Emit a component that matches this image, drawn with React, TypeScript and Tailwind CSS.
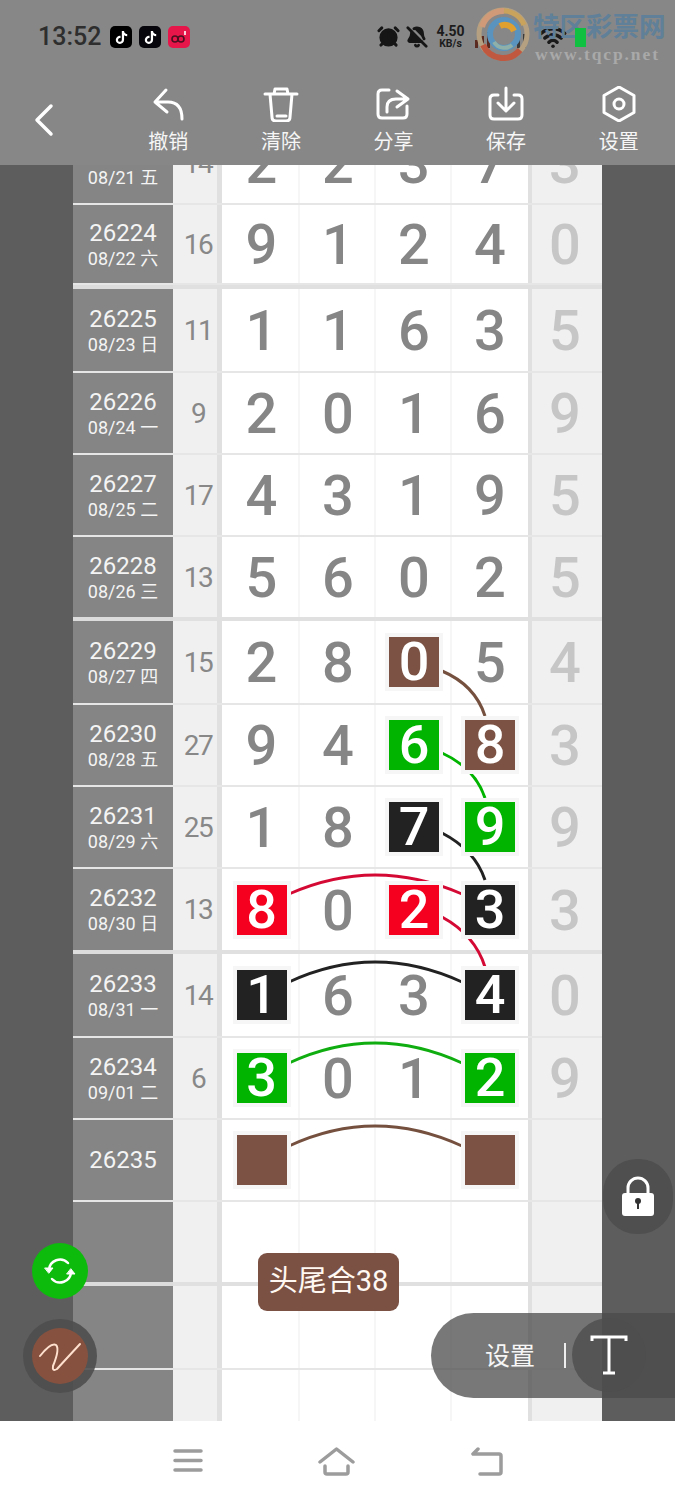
import React from "react";
import { FaTiktok } from "react-icons/fa";
import { Wifi, AlarmClock, BellOff } from "lucide-react";

type Cell = { v: string; c?: "b" | "g" | "k" | "r" };
type Row = { id: string; date: string; sum: string; cells: Cell[]; last: string; h: string };

const boxClass: Record<string, string> = {
  b: "bg-[#7b5243]",
  g: "bg-[#00b400]",
  k: "bg-[#222222]",
  r: "bg-[#f5001e]",
};

const cellClass = [
  "w-[78px] pl-[3px] border-r-2 border-[#f6f6f6]",
  "w-[76px] pl-[2px] border-r-2 border-[#f6f6f6]",
  "w-[76px] pl-[2px] border-r-2 border-[#f6f6f6]",
  "w-[76px]",
];

const d = (s: string): Cell[] =>
  s.split(" ").map((t) => ({ v: t[0] === "_" ? "" : t[0], c: t[1] as Cell["c"] }));

const groups: Row[][] = [
  [
    { id: "26223", date: "08/21 五", sum: "14", cells: d("2 2 3 7"), last: "3", h: "h-[82px]" },
    { id: "26224", date: "08/22 六", sum: "16", cells: d("9 1 2 4"), last: "0", h: "h-[80px]" },
  ],
  [
    { id: "26225", date: "08/23 日", sum: "11", cells: d("1 1 6 3"), last: "5", h: "h-[84px]" },
    { id: "26226", date: "08/24 一", sum: "9", cells: d("2 0 1 6"), last: "9", h: "h-[82px]" },
    { id: "26227", date: "08/25 二", sum: "17", cells: d("4 3 1 9"), last: "5", h: "h-[82px]" },
    { id: "26228", date: "08/26 三", sum: "13", cells: d("5 6 0 2"), last: "5", h: "h-[80px]" },
  ],
  [
    { id: "26229", date: "08/27 四", sum: "15", cells: d("2 8 0b 5"), last: "4", h: "h-[84px]" },
    { id: "26230", date: "08/28 五", sum: "27", cells: d("9 4 6g 8b"), last: "3", h: "h-[82px]" },
    { id: "26231", date: "08/29 六", sum: "25", cells: d("1 8 7k 9g"), last: "9", h: "h-[82px]" },
    { id: "26232", date: "08/30 日", sum: "13", cells: d("8r 0 2r 3k"), last: "3", h: "h-[81px]" },
  ],
  [
    { id: "26233", date: "08/31 一", sum: "14", cells: d("1k 6 3 4k"), last: "0", h: "h-[84px]" },
    { id: "26234", date: "09/01 二", sum: "6", cells: d("3g 0 1 2g"), last: "9", h: "h-[82px]" },
    { id: "26235", date: "", sum: "", cells: d("_b _ _ _b"), last: "", h: "h-[82px]" },
    { id: "", date: "", sum: "", cells: d("_ _ _ _"), last: "", h: "h-[80px]" },
  ],
  [
    { id: "", date: "", sum: "", cells: d("_ _ _ _"), last: "", h: "h-[84px]" },
    { id: "", date: "", sum: "", cells: d("_ _ _ _"), last: "", h: "h-[82px]" },
  ],
];

function GridRow({ r, isLast }: { r: Row; isLast: boolean }) {
  const line = isLast ? "" : "border-b-2 border-[#e6e6e6]";
  return (
    <div className={`flex ${r.h} ${line}`}>
      <div className="w-[100px] shrink-0 bg-[#858585] flex flex-col items-center justify-center text-[#f4f4f4]">
        {r.id && <div className="text-[24px] leading-[27px]">{r.id}</div>}
        {r.date && <div className="text-[18px] leading-[24px] -mb-[2px]">{r.date}</div>}
      </div>
      <div className="w-[49px] shrink-0 pl-[6px] pt-[1px] bg-[#f0f0f0] border-r-[5px] border-[#e0e0e0] flex items-center justify-center text-[28px] text-[#888888] tracking-[-1.5px]">
        {r.sum}
      </div>
      {r.cells.map((c, i) => (
        <div
          key={i}
          className={`${cellClass[i]} shrink-0 bg-white flex items-center justify-center text-[56px] font-medium leading-none text-[#868686]`}
        >
          {c.c ? (
            <div className="relative z-10 w-[58px] h-[58px] bg-[#f6f6f6] flex items-center justify-center">
              <div className={`w-[50px] h-[50px] ${boxClass[c.c]} flex items-center justify-center text-white font-medium text-[54px]`}>
                {c.v}
              </div>
            </div>
          ) : (
            <span className="pt-[2px]">{c.v}</span>
          )}
        </div>
      ))}
      <div className="w-[74px] shrink-0 pr-[4px] pt-[2px] bg-[#f0f0f0] border-l-4 border-[#e0e0e0] flex items-center justify-center text-[56px] font-medium leading-none text-[#c6c6c6]">
        {r.last}
      </div>
    </div>
  );
}

function ToolItem({ label, children }: { label: string; children: React.ReactNode }) {
  return (
    <div className="flex-1 flex flex-col items-center">
      <svg width="36" height="36" viewBox="0 0 36 36" fill="none" stroke="white" strokeWidth="3" strokeLinecap="round" strokeLinejoin="round">
        {children}
      </svg>
      <div className="text-[20px] leading-[28px] text-[#f6f6f6] mt-[6px]">{label}</div>
    </div>
  );
}

export default function App() {
  return (
    <div
      className="relative w-[675px] h-[1500px] overflow-hidden bg-white flex flex-col"
      style={{ fontFamily: 'Roboto, "Noto Sans CJK SC", sans-serif' }}
    >
      {/* Header */}
      <div className="relative h-[165px] shrink-0 bg-[#878787] z-20">
        <div className="relative h-[86px] flex items-start pt-[22px] pl-[38px]">
          <span className="text-[25px] leading-[30px] font-medium text-[#2e2e2e]">13:52</span>
          <div className="flex gap-[7px] ml-[9px] mt-[4px]">
            <div className="w-[22px] h-[22px] rounded-[5px] bg-black flex items-center justify-center">
              <FaTiktok className="text-white text-[13px]" />
            </div>
            <div className="w-[22px] h-[22px] rounded-[5px] bg-[#06060c] flex items-center justify-center">
              <FaTiktok className="text-white text-[13px]" />
            </div>
            <div className="w-[22px] h-[22px] rounded-[5px] bg-[#e6154a] flex items-center justify-center">
              <svg width="18" height="14" viewBox="0 0 18 14" fill="none" stroke="#4a1020" strokeWidth="1.6">
                <circle cx="5" cy="9" r="3" />
                <circle cx="11" cy="9" r="3" />
                <path d="M15 1v4" stroke="white" />
              </svg>
            </div>
          </div>
          <div className="absolute left-[377px] top-[25px] text-[#161616]">
            <AlarmClock size={23} strokeWidth={3} fill="#161616" stroke="#161616" />
          </div>
          <div className="absolute left-[406px] top-[26px] text-[#161616]">
            <BellOff size={22} strokeWidth={3} fill="#161616" stroke="#161616" />
          </div>
          <div className="absolute left-[435px] top-[24px] w-[31px] text-center font-bold text-[#1c1c1c]">
            <div className="text-[14px] leading-[14px]">4.50</div>
            <div className="text-[10.500px] leading-[12px]">KB/s</div>
          </div>
          {/* signal bars under the watermark */}
          <div className="absolute left-[475px] top-[30px] flex items-end gap-[3px] h-[18px]">
            <div className="w-[3px] h-[8px] bg-[#5a2a20]" />
            <div className="w-[3px] h-[12px] bg-[#5a2a20]" />
            <div className="w-[3px] h-[16px] bg-[#5a2a20]" />
            <div className="w-[3px] h-[10px] bg-[#3a3a3a] ml-[24px]" />
            <div className="w-[3px] h-[14px] bg-[#3a3a3a]" />
          </div>
          <div className="absolute left-[539px] top-[23px] text-[#1a1a1a]">
            <Wifi size={28} strokeWidth={3} />
          </div>
          {/* watermark */}
          <svg className="absolute left-[474px] top-[7px]" width="58" height="54" viewBox="0 0 58 54" fill="none">
            <circle cx="29" cy="27" r="24" stroke="#b5a181" strokeWidth="5" />
            <path d="M8 20A22 22 0 0 1 30 4" stroke="#d09a78" strokeWidth="6" />
            <path d="M30 4A22 22 0 0 1 50 18" stroke="#c9a25c" strokeWidth="5" />
            <path d="M9 38A22 22 0 0 0 46 43" stroke="#c0573f" strokeWidth="6" />
            <circle cx="30" cy="27" r="14" stroke="#5a93bd" strokeWidth="6" />
            <path d="M26 19A10 10 0 0 1 40 24" stroke="#e0a02f" strokeWidth="6" />
            <path d="M20 35A12 12 0 0 0 38 38" stroke="#8fb0a8" strokeWidth="4" />
          </svg>
          <div className="absolute left-[533px] top-[12px] text-[26.500px] leading-[30px] font-bold text-[#5f8098] whitespace-nowrap">
            特区彩票网
          </div>
          <div className="absolute left-[575px] top-[28px] w-[11px] h-[19px] bg-[#10c040]" />
          <div
            className="absolute left-[535px] top-[45px] text-[17.500px] leading-[18px] font-bold text-[#a9a9a9] tracking-[1.900px] whitespace-nowrap"
            style={{ fontFamily: '"Liberation Serif", serif' }}
          >
            www.tqcp.net
          </div>
        </div>
        <div className="flex h-[79px] items-start">
          <div className="w-[112px] shrink-0 pl-[34px] pt-[17px]">
            <svg width="22" height="34" viewBox="0 0 22 34" fill="none" stroke="white" strokeWidth="3.5" strokeLinecap="round" strokeLinejoin="round">
              <path d="M17 3 3 17l14 14" />
            </svg>
          </div>
          <div className="flex-1 flex">
            <ToolItem label="撤销">
              <path d="M16 4 5 16l12 10M5 16h13q14 0 14 17" />
            </ToolItem>
            <ToolItem label="清除">
              <path d="M2 8h32M11 8l1-5h12l1 5M7 8l2 23q0 4 4 4h10q4 0 4-4l2-23M14 30h9" />
            </ToolItem>
            <ToolItem label="分享">
              <path d="M14 4H7Q3 4 3 8v20q0 4 4 4h21q4 0 4-4v-8M12 26v-5q0-8 9-8h12M22 5l11 8-11 8" />
            </ToolItem>
            <ToolItem label="保存">
              <path d="M10 9H6q-4 0-4 4v16q0 4 4 4h24q4 0 4-4V13q0-4-4-4h-4M18 2v22M10 17l8 8 8-8" />
            </ToolItem>
            <ToolItem label="设置">
              <path d="M18 1 33 9.5v17L18 35 3 26.500V9.500Z" />
              <circle cx="18" cy="18" r="5" />
            </ToolItem>
          </div>
        </div>
      </div>

      {/* Body */}
      <div className="relative h-[1256px] shrink-0 overflow-hidden bg-[#5d5d5d] flex justify-center">
        <div className="w-[529px] shrink-0 -mt-[42px]">
          {groups.map((g, gi) => (
            <div key={gi}>
              {gi > 0 && (
                <div className="h-1 flex">
                  <div className="w-[100px] bg-[#dcdcdc]" />
                  <div className="flex-1 bg-[#e0e0e0]" />
                </div>
              )}
              {g.map((r, i) => (
                <GridRow key={i} r={r} isLast={i === 3} />
              ))}
            </div>
          ))}
        </div>
        {/* connecting curves */}
        <svg className="absolute left-0 top-0" width="675" height="1256" viewBox="0 165 675 1256" fill="none" strokeWidth="3">
          <path d="M442 671Q475 685 485 716" stroke="#75503f" />
          <path d="M442 753Q475 768 485 798" stroke="#00b400" />
          <path d="M442 833Q475 850 485 880" stroke="#222222" />
          <path d="M289 894Q375 856 462 894" stroke="#d40a35" />
          <path d="M442 917Q475 935 485 967" stroke="#d40a35" />
          <path d="M289 982Q375 942 462 982" stroke="#222222" />
          <path d="M289 1063Q375 1023 462 1063" stroke="#10ad10" />
          <path d="M289 1146Q375 1106 462 1146" stroke="#75503f" />
        </svg>
      </div>

      {/* Footer nav */}
      <div className="flex-1 relative bg-white">
        <svg className="absolute left-[172px] top-[27px]" width="32" height="26" viewBox="0 0 32 26" fill="none" stroke="#9c9c9c" strokeWidth="3.500" strokeLinecap="round">
          <path d="M3 3h26M3 12.500h26M3 22h26" />
        </svg>
        <svg className="absolute left-[318px] top-[26px]" width="38" height="30" viewBox="0 0 38 30" fill="none" stroke="#9c9c9c" strokeWidth="3.500" strokeLinecap="round" strokeLinejoin="round">
          <path d="M2 15 18.500 2 35 15M7 19v6q0 2 2 2h19q2 0 2-2v-6" />
        </svg>
        <svg className="absolute left-[470px] top-[26px]" width="34" height="30" viewBox="0 0 34 30" fill="none" stroke="#9c9c9c" strokeWidth="3.500" strokeLinecap="round" strokeLinejoin="round">
          <path d="M8 2 3 7h26q2 0 2 2v16q0 2-2 2H10" />
        </svg>
      </div>

      {/* Floating controls */}
      <div className="absolute left-[258px] top-[1253px] w-[141px] h-[58px] rounded-[9px] bg-[#7b5144] text-[#fff8f2] text-[29px] flex items-center justify-center z-30">
        头尾合38
      </div>
      <div className="absolute left-[32px] top-[1243px] w-[56px] h-[56px] rounded-full bg-[#0dbb0d] flex items-center justify-center z-30">
        <svg width="32" height="30" viewBox="0 0 32 30" fill="none" stroke="white" strokeWidth="2.500" strokeLinecap="round">
          <path d="M5 14A11 11 0 0 1 24 7" />
          <path d="M27 16A11 11 0 0 1 8 23" />
          <path d="M1 12h8l-4 5ZM23 18h8l-4-5Z" fill="white" strokeWidth="1" strokeLinejoin="round" />
        </svg>
      </div>
      <div className="absolute left-[23px] top-[1319px] w-[74px] h-[74px] rounded-full bg-[#4e4e4e]/90 flex items-center justify-center z-30">
        <div className="w-[56px] h-[56px] rounded-full bg-[#86523f] flex items-center justify-center">
          <svg width="46" height="40" viewBox="0 0 46 40" fill="none" stroke="#ffe0cf" strokeWidth="2" strokeLinecap="round">
            <path d="M3 20Q14 6 19 9 23 13 16 30q-1 6 4 3Q30 22 43 8" />
          </svg>
        </div>
      </div>
      <div className="absolute left-[603px] top-[1159px] w-[70px] h-[75px] rounded-[34px] bg-[#4f4f4f] flex items-center justify-center z-30">
        <svg width="36" height="42" viewBox="0 0 36 42" fill="none">
          <path d="M8 20v-8a10 10 0 0 1 20 0v8" stroke="white" strokeWidth="3" />
          <rect x="2" y="17" width="32" height="23" rx="3" fill="white" />
          <circle cx="18" cy="25" r="3" fill="#333333" />
          <path d="M18 26v7" stroke="#333333" strokeWidth="2" />
        </svg>
      </div>
      <div className="absolute left-[431px] top-[1313px] w-[244px] h-[85px] rounded-l-[43px] bg-[#4b4b4b]/75 flex items-center z-30">
        <span className="absolute left-[54px] top-[26px] text-[25px] leading-[36px] text-[#f6f6f6]">设置</span>
        <div className="absolute left-[133px] top-[30px] w-[2px] h-[25px] bg-[#eeeeee]" />
        <div className="absolute left-[141px] top-[5px] w-[74px] h-[74px] rounded-full bg-[#4e4e4e]/80 flex items-center justify-center">
          <svg width="38" height="40" viewBox="0 0 38 40" fill="none" stroke="white" strokeWidth="3">
            <path d="M2 6V2h34v4M19 2v36M13 38h12" />
          </svg>
        </div>
      </div>
    </div>
  );
}
